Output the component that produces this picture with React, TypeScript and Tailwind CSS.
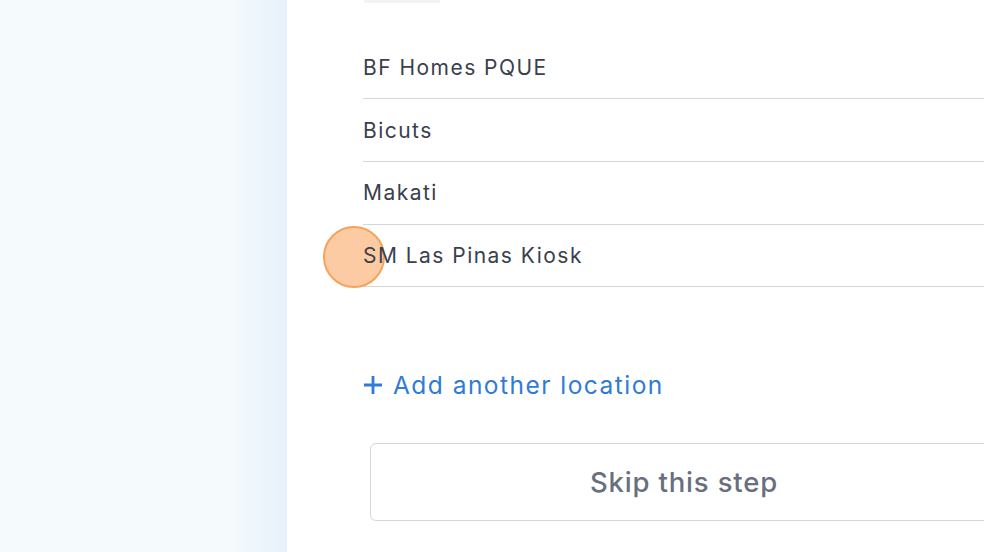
const locations = ["BF Homes PQUE", "Bicuts", "Makati", "SM Las Pinas Kiosk"];

export default function App() {
  return (
    <div
      className="flex h-[552px] w-[984px] overflow-hidden bg-white"
      style={{ fontFamily: "Inter, 'Noto Sans', sans-serif" }}
    >
      <div className="h-full w-[287px] shrink-0 bg-gradient-to-r from-[#f5fbfd] from-80% to-[#e7f0fa]" />

      <div className="flex flex-1 flex-col pl-[76px]">
        <div className="ml-[1px] h-[3px] w-[76px] bg-[#f2f3f4]" />
        <ul className="mt-[33.5px] mr-[1px]">
          {locations.map((name, i) => (
            <li
              key={name}
              className="relative flex h-[62.7px] items-center border-b border-[#d6d6d6] pt-[1px] text-[21px] tracking-[0.07em] text-[#3a404d]"
            >
              {i === 3 && (
                <span className="absolute left-[-40px] top-[1px] h-[62px] w-[62px] rounded-full border-2 border-[#f5a35c] bg-[#fcb57c]/70" />
              )}
              <span className="relative">{name}</span>
            </li>
          ))}
        </ul>

        <button className="mt-[80px] flex h-[36px] items-center gap-[10px] self-start text-[24.5px] tracking-[0.06em] text-[#2f7bd6]">
          <svg width="20" height="20" viewBox="0 0 20 20" className="shrink-0">
            <path d="M10 1v18M1 10h18" stroke="currentColor" strokeWidth="2.8" />
          </svg>
          <span>Add another location</span>
        </button>

        <div className="ml-[7px] mt-[40px] flex h-[78px] w-[628px] shrink-0 items-center justify-center rounded-[6px] border border-[#d6d6d6] text-[27.5px] font-medium tracking-[0.03em] text-[#687080]">
          Skip this step
        </div>
      </div>
    </div>
  );
}
